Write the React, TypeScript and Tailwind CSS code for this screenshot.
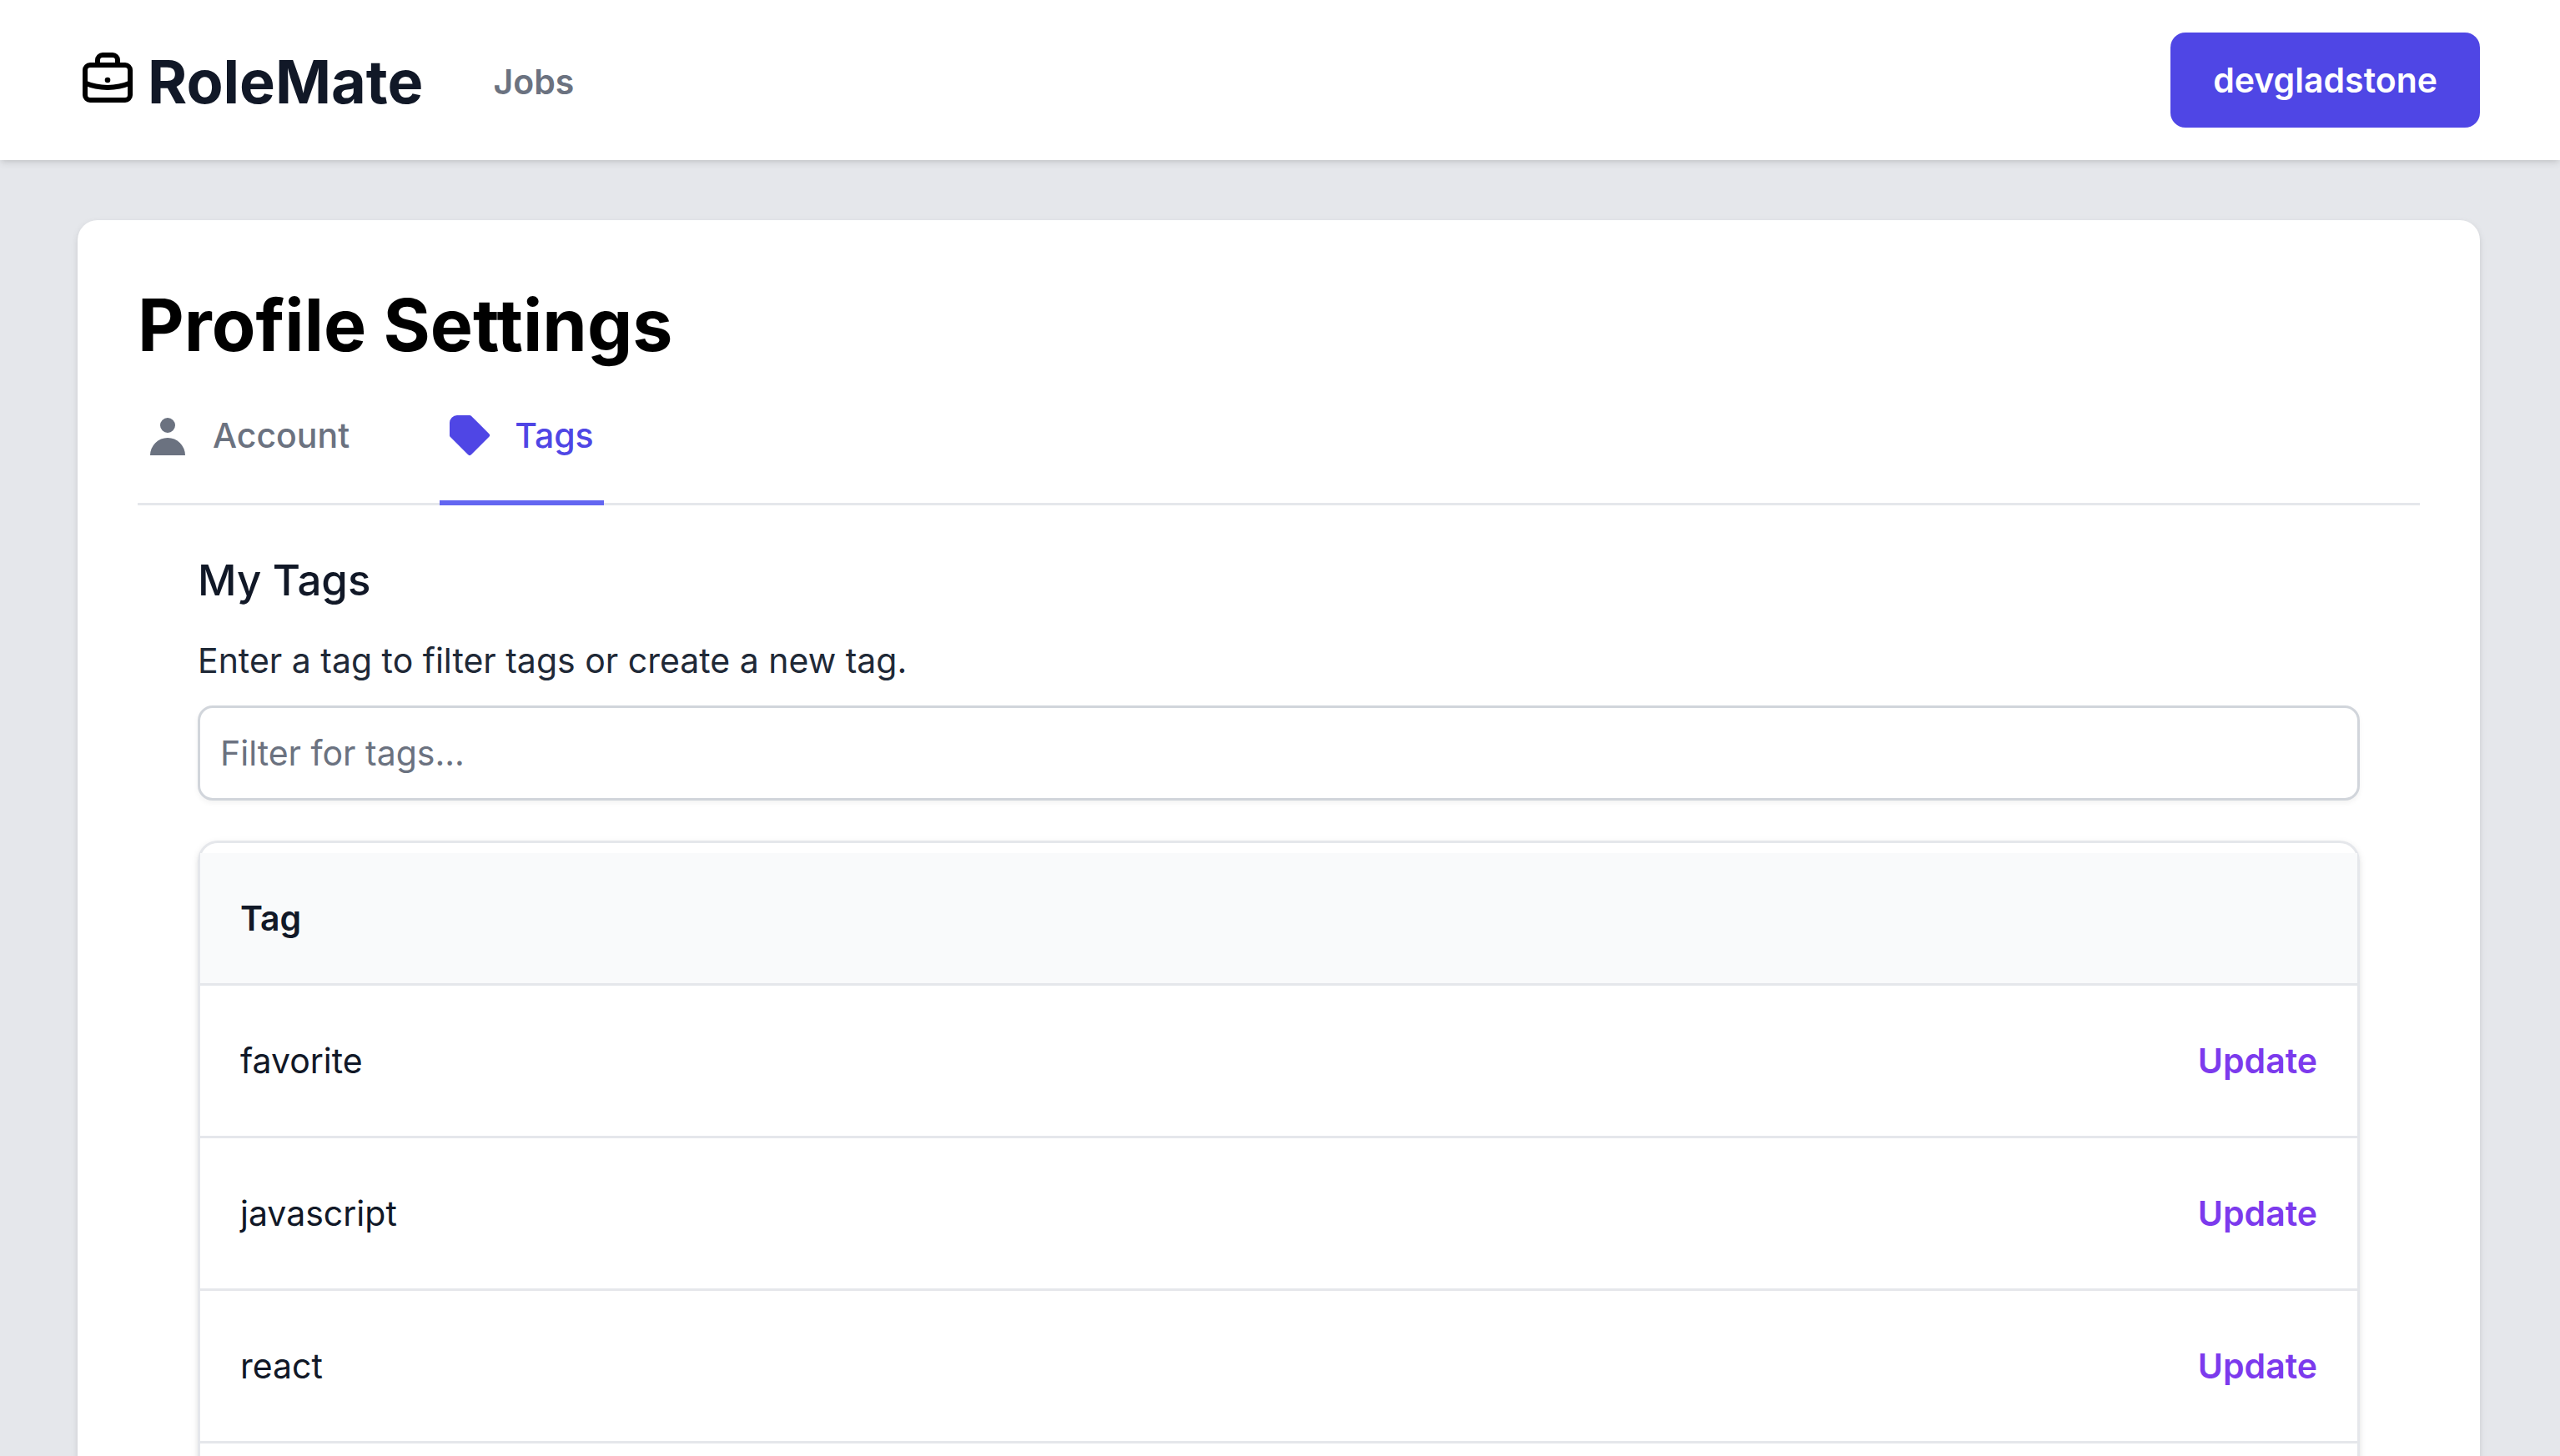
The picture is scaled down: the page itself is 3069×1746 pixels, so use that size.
import React from "react";

const tags = ["favorite", "javascript", "react"];

function BriefcaseIcon() {
  return (
    <svg viewBox="0 1 24 24" fill="none" stroke="#000" strokeWidth="2" className="size-[72px]" aria-hidden="true">
      <path d="M8 6.5V5a2 2 0 0 1 2-2h4a2 2 0 0 1 2 2v1.5" />
      <rect x="3" y="7" width="18" height="14" rx="2" />
      <path d="M3 14.200c5.500 2.400 12.500 2.400 18 0" />
      <circle cx="12" cy="13" r="1.100" fill="#000" stroke="none" />
    </svg>
  );
}

function UserIcon() {
  return (
    <svg viewBox="0 0 20 20" fill="currentColor" className="size-[60px]" aria-hidden="true">
      <path d="M10 9a3 3 0 100-6 3 3 0 000 6zm-7 9a7 7 0 1114 0H3z" />
    </svg>
  );
}

function TagIcon() {
  return (
    <svg viewBox="0 0 20 20" fill="currentColor" className="size-[60px]" aria-hidden="true">
      <path d="M17.707 9.293a1 1 0 010 1.414l-7 7a1 1 0 01-1.414 0l-7-7A.997.997 0 012 10V5a3 3 0 013-3h5c.256 0 .512.098.707.293l7 7z" />
    </svg>
  );
}

export default function App() {
  return (
    <div className="min-h-screen bg-[#e5e7eb] font-['Inter',sans-serif] text-[41px] leading-[60px] text-[#111827]">
      <header className="relative flex items-center justify-between bg-white py-[39px] pr-24 pl-[93px] shadow-[0_3px_9px_rgba(0,0,0,0.1),0_3px_6px_-3px_rgba(0,0,0,0.1)]">
        <div className="flex items-center">
          <a href="#" className="flex items-center gap-3">
            <BriefcaseIcon />
            <span className="pt-1 text-[72px] leading-[96px] font-bold">RoleMate</span>
          </a>
          <nav className="ml-[84px] pt-1">
            <a href="#jobs" className="font-semibold text-[#6b7280]">Jobs</a>
          </nav>
        </div>
        <button type="button" className="rounded-[18px] bg-[#4f46e5] px-[51px] py-[27px] font-semibold text-white">
          devgladstone
        </button>
      </header>

      <main className="pt-[72px] pr-24 pl-[93px]">
        <section className="rounded-t-[24px] bg-white px-[72px] pt-[72px] shadow-[0_3px_9px_rgba(0,0,0,0.1),0_3px_6px_-3px_rgba(0,0,0,0.1)]">
          <h1 className="text-[86px] leading-[108px] font-bold text-black">Profile Settings</h1>
          <nav className="flex gap-24 shadow-[inset_0_-3px_0_#e5e7eb]">
            <a href="#account" className="flex items-center gap-6 border-b-6 border-transparent py-12 pr-3 pl-1.5 font-medium text-[#6b7280]">
              <UserIcon />
              Account
            </a>
            <a href="#tags" aria-current="page" className="flex items-center gap-6 border-b-6 border-[#6366f1] py-12 pr-3 pl-1.5 font-medium text-[#4f46e5]">
              <TagIcon />
              Tags
            </a>
          </nav>

          <div className="px-[72px] pt-12">
            <h2 className="text-[51px] leading-[84px] font-medium">My Tags</h2>
            <label htmlFor="filter" className="mt-6 block text-[#1f2937]">
              Enter a tag to filter tags or create a new tag.
            </label>
            <input
              id="filter"
              type="text"
              placeholder="Filter for tags..."
              className="mt-6 block w-full rounded-[18px] border-3 border-[#d1d5db] bg-white px-6 py-6 shadow-[0_3px_6px_rgba(0,0,0,0.05)] placeholder:text-[#6b7280]"
            />

            <div className="mt-12 rounded-t-[24px] border-x-3 border-t-3 border-[#e5e7eb] pt-3 pb-12 shadow-[0_3px_9px_rgba(0,0,0,0.1),0_3px_6px_-3px_rgba(0,0,0,0.1)]">
              <table className="w-full">
                <thead className="bg-[#f9fafb]">
                  <tr>
                    <th scope="col" className="px-12 py-12 text-left font-semibold">Tag</th>
                    <th scope="col" aria-label="Actions" />
                  </tr>
                </thead>
                <tbody className="border-b-3 border-[#e5e7eb]">
                  {tags.map((tag) => (
                    <tr key={tag} className="border-t-3 border-[#e5e7eb]">
                      <td className="px-12 py-[60px]">{tag}</td>
                      <td className="px-12 py-[60px] text-right">
                        <button type="button" className="font-semibold text-[#7c3aed]">Update</button>
                      </td>
                    </tr>
                  ))}
                </tbody>
              </table>
            </div>
          </div>
        </section>
      </main>
    </div>
  );
}
